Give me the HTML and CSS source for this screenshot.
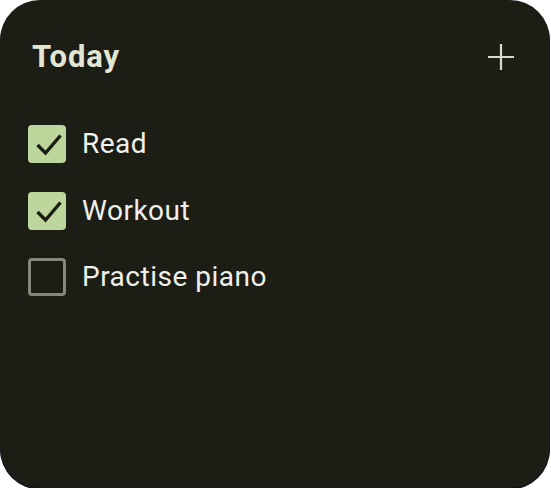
FILE: index.html
```html
<!DOCTYPE html>
<html>
<head>
<meta charset="utf-8">
<link rel="stylesheet" href="styles.css">
</head>
<body>
<div class="card">
  <div class="header">
    <h1 class="title">Today</h1>
    <svg class="add" width="26" height="26" viewBox="0 0 26 26"><path d="M13 0V26M0 13H26" stroke="#d6dac8" stroke-width="2.2" fill="none"/></svg>
  </div>
  <ul class="list">
    <li class="item">
      <span class="box checked"><svg width="38" height="38" viewBox="0 0 38 38"><path d="M9.5 20L17.5 28L32.5 10.5" stroke="#1c1e16" stroke-width="3.4" fill="none" stroke-linecap="butt"/></svg></span>
      <span class="label">Read</span>
    </li>
    <li class="item">
      <span class="box checked"><svg width="38" height="38" viewBox="0 0 38 38"><path d="M9.5 20L17.5 28L32.5 10.5" stroke="#1c1e16" stroke-width="3.4" fill="none" stroke-linecap="butt"/></svg></span>
      <span class="label">Workout</span>
    </li>
    <li class="item">
      <span class="box"></span>
      <span class="label">Practise piano</span>
    </li>
  </ul>
</div>
</body>
</html>
```
FILE: styles.css
```css
html, body {
  margin: 0;
  padding: 0;
  background: #ffffff;
}
.card {
  box-sizing: border-box;
  width: 550px;
  height: 488px;
  background: #1c1e16;
  border-radius: 40px;
  box-shadow: 0 1.5px 0 #10111e;
  padding: 39px 36px 0 32px;
  font-family: Roboto, "Liberation Sans", sans-serif;
}
.header {
  display: flex;
  justify-content: space-between;
  align-items: center;
  height: 36px;
}
.title {
  margin: 0;
  font-size: 31px;
  line-height: 36px;
  font-weight: 700;
  letter-spacing: 0.9px;
  color: #e4e6d4;
}
.list {
  list-style: none;
  margin: 50px 0 0 -4px;
  padding: 0;
  display: flex;
  flex-direction: column;
  gap: 28.5px;
}
.item {
  display: flex;
  align-items: center;
  gap: 16px;
}
.box {
  box-sizing: border-box;
  width: 38px;
  height: 38px;
  border-radius: 4px;
  border: 3.5px solid #85877b;
  flex: none;
}
.box.checked {
  background: #bcd69c;
  border: none;
}
.box svg {
  display: block;
}
.label {
  font-size: 28px;
  line-height: 38px;
  letter-spacing: 0.5px;
  color: #f0f0ec;
}
```
